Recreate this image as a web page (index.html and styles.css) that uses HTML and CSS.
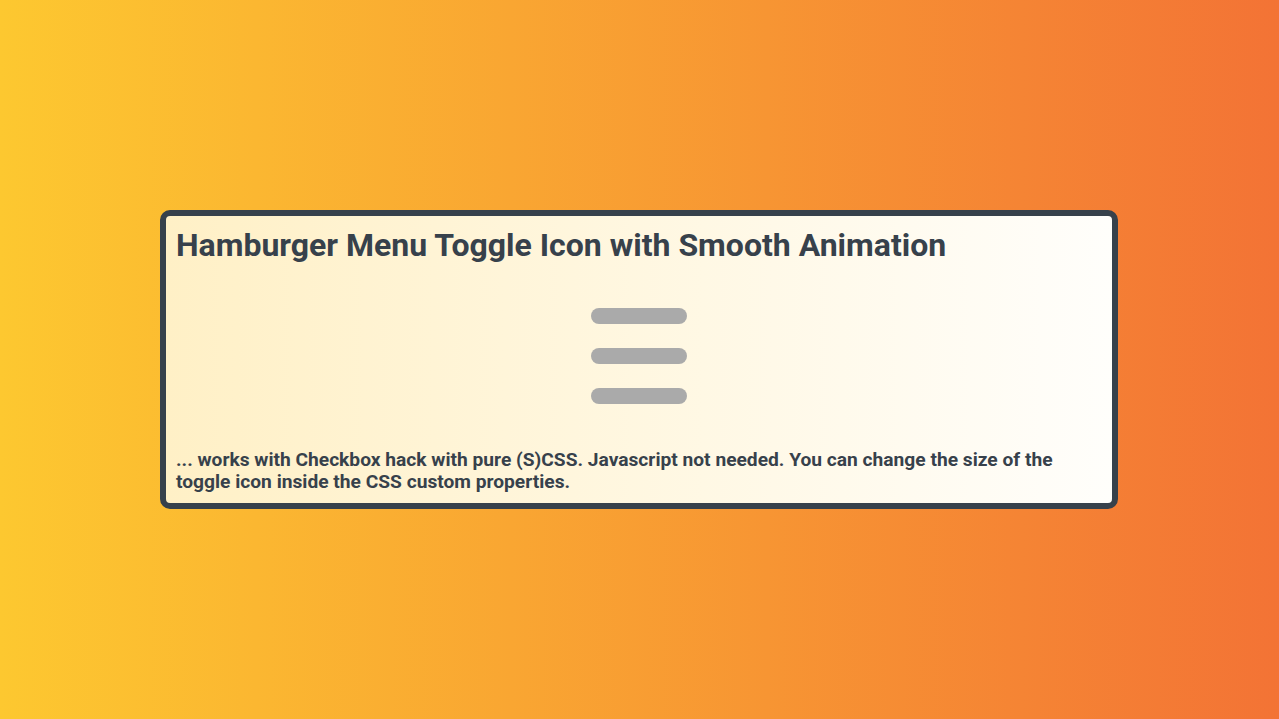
FILE: index.html
```html
<!DOCTYPE html>
<html lang="en">
<head>
<meta charset="utf-8">
<title>Hamburger Menu Toggle Icon</title>
<link rel="stylesheet" href="styles.css">
</head>
<body>
<main class="card">
  <h1 class="title">Hamburger Menu Toggle Icon with Smooth Animation</h1>
  <div class="toggle-wrap">
    <label class="toggle">
      <input type="checkbox" class="toggle-input">
      <span class="bar"></span>
      <span class="bar"></span>
      <span class="bar"></span>
    </label>
  </div>
  <p class="note">... works with Checkbox hack with pure (S)CSS. Javascript not needed. You can change the size of the toggle icon inside the CSS custom properties.</p>
</main>
</body>
</html>
```
FILE: styles.css
```css
html, body {
  margin: 0;
  height: 100%;
}
body {
  box-sizing: border-box;
  padding-right: 1px;
  display: flex;
  align-items: center;
  justify-content: center;
  background: linear-gradient(to right, #fdc830, #f37335);
  font-family: Roboto, "Noto Sans", sans-serif;
  color: #37414b;
}
.card {
  box-sizing: border-box;
  width: 958px;
  border: 6px solid #37414b;
  border-radius: 10px;
  padding: 10px;
  background: linear-gradient(to right, #fff0c6, #fffefb);
}
.title {
  margin: 0;
  font-size: 32px;
  line-height: 38px;
  font-weight: 700;
}
.toggle-wrap {
  display: flex;
  justify-content: center;
  margin-top: 44px;
}
.toggle {
  display: flex;
  flex-direction: column;
  gap: 24px;
  cursor: pointer;
}
.toggle-input {
  display: none;
}
.bar {
  display: block;
  width: 96px;
  height: 16px;
  border-radius: 8px;
  background: #aaaaaa;
}
.note {
  margin: 45px 0 0;
  font-size: 19.2px;
  line-height: 22px;
  font-weight: 700;
}
```
